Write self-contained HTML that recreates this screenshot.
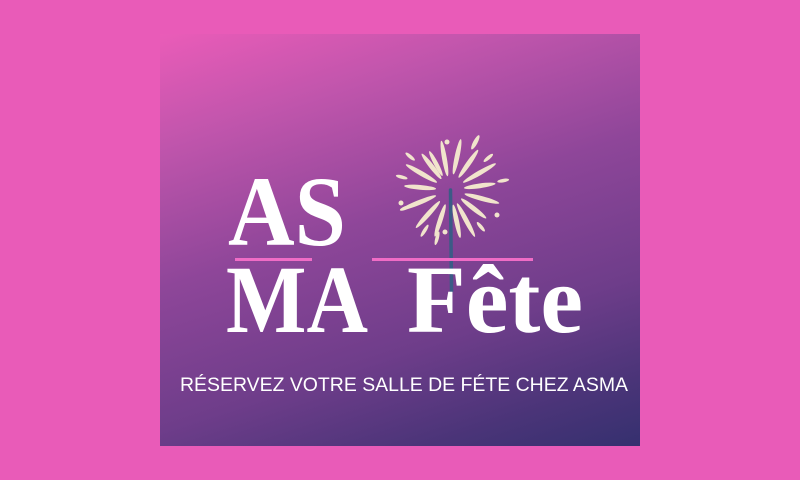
<!DOCTYPE html>
<html><head><meta charset="utf-8"><style>
html,body{margin:0;padding:0;width:800px;height:480px;overflow:hidden;background:#e95bb8}
.box{position:absolute;left:160px;top:34px;width:480px;height:412px;
background:linear-gradient(162deg,#ea5cb8 0%,#c055ac 20%,#8e4699 45%,#6e3d8a 70%,#4a3478 88%,#35306f 100%)}
svg{position:absolute;left:0;top:0}
</style></head><body>
<div class="box"></div>
<svg width="800" height="480" viewBox="0 0 800 480">
<g fill="#f1e4cc">
<g transform="translate(450,190)">
<ellipse cx="0" cy="-32" rx="2.4" ry="18" transform="rotate(-10)"/>
<ellipse cx="0" cy="-34" rx="2.4" ry="18" transform="rotate(12)"/>
<ellipse cx="0" cy="-32" rx="2.4" ry="17" transform="rotate(35)"/>
<ellipse cx="0" cy="-34" rx="2.4" ry="19" transform="rotate(60)"/>
<ellipse cx="0" cy="-30" rx="2.4" ry="16" transform="rotate(82)"/>
<ellipse cx="0" cy="-33" rx="2.4" ry="18" transform="rotate(105)"/>
<ellipse cx="0" cy="-30" rx="2.4" ry="16" transform="rotate(128)"/>
<ellipse cx="0" cy="-34" rx="2.4" ry="19" transform="rotate(152)"/>
<ellipse cx="0" cy="-32" rx="2.4" ry="17" transform="rotate(168)"/>
<ellipse cx="0" cy="-32" rx="2.4" ry="17" transform="rotate(198)"/>
<ellipse cx="0" cy="-33" rx="2.4" ry="18" transform="rotate(222)"/>
<ellipse cx="0" cy="-34" rx="2.4" ry="19" transform="rotate(248)"/>
<ellipse cx="0" cy="-30" rx="2.4" ry="16" transform="rotate(275)"/>
<ellipse cx="0" cy="-33" rx="2.4" ry="18" transform="rotate(300)"/>
<ellipse cx="0" cy="-30" rx="2.4" ry="16" transform="rotate(322)"/>
<ellipse cx="0" cy="-30" rx="2.2" ry="14" transform="rotate(-28)"/>
<ellipse cx="0" cy="-54" rx="2.2" ry="8" transform="rotate(28)"/>
<ellipse cx="0" cy="-52" rx="1.8" ry="6" transform="rotate(-50)"/>
<ellipse cx="0" cy="-50" rx="1.8" ry="6" transform="rotate(50)"/>
<ellipse cx="0" cy="-50" rx="1.8" ry="6" transform="rotate(-75)"/>
<ellipse cx="0" cy="-54" rx="1.8" ry="6" transform="rotate(80)"/>
<ellipse cx="0" cy="-48" rx="1.8" ry="6" transform="rotate(-112)"/>
<ellipse cx="0" cy="-48" rx="1.8" ry="6" transform="rotate(140)"/>
<ellipse cx="0" cy="-48" rx="1.8" ry="7" transform="rotate(-148)"/>
<ellipse cx="0" cy="-50" rx="1.8" ry="7" transform="rotate(-165)"/>
<circle cx="-3" cy="-48" r="2.5"/>
<circle cx="-49" cy="13" r="2.5"/>
<circle cx="47" cy="25" r="2.5"/>
<circle cx="-5" cy="42" r="2.5"/>
</g>
</g>
<line x1="450.5" y1="190" x2="451.5" y2="291" stroke="#3b5b86" stroke-width="3.5" stroke-linecap="round"/>
<rect x="235" y="258" width="77" height="3" fill="#f06cc6"/>
<rect x="372" y="258" width="161" height="3" fill="#f06cc6"/>
<g fill="#fff" font-family="Liberation Serif, serif" font-weight="bold">
<text x="228" y="245" font-size="100" textLength="118" lengthAdjust="spacingAndGlyphs">AS</text>
<text x="226" y="332" font-size="96" textLength="142" lengthAdjust="spacingAndGlyphs">MA</text>
<text x="407" y="332" font-size="96" textLength="176" lengthAdjust="spacingAndGlyphs">Fête</text>
</g>
<text x="180" y="391" fill="#fff" font-family="Liberation Sans, sans-serif" font-size="19.5" textLength="448" lengthAdjust="spacingAndGlyphs">RÉSERVEZ VOTRE SALLE DE FÉTE CHEZ ASMA</text>
</svg>
</body></html>
